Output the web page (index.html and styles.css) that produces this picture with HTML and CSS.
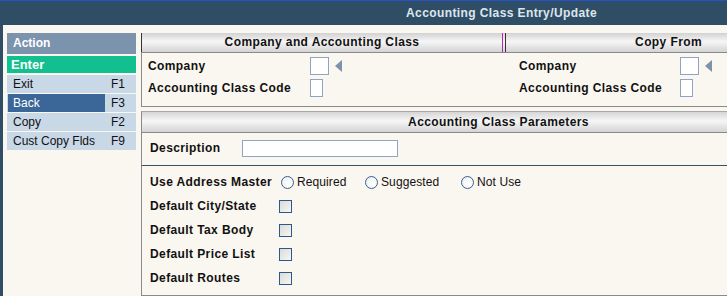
FILE: index.html
```html
<!DOCTYPE html>
<html>
<head>
<meta charset="utf-8">
<link rel="stylesheet" href="styles.css">
</head>
<body>
<div class="topbar"><span class="title">Accounting Class Entry/Update</span></div>
<div class="main">
  <div class="sidebar">
    <div class="act-head">Action</div>
    <div class="enter">Enter</div>
    <div class="item"><span class="lbl">Exit</span><span class="key">F1</span></div>
    <div class="item"><span class="lbl sel">Back</span><span class="key">F3</span></div>
    <div class="item"><span class="lbl">Copy</span><span class="key">F2</span></div>
    <div class="item"><span class="lbl">Cust Copy Flds</span><span class="key">F9</span></div>
  </div>
  <div class="content">
    <div class="panel1">
      <div class="heads">
        <div class="h1">Company and Accounting Class</div>
        <div class="h2">Copy From</div>
      </div>
      <div class="p1body">
        <div class="half left">
          <div class="frow"><span class="flabel">Company</span><span class="inp w19"></span><span class="tri"></span></div>
          <div class="frow"><span class="flabel">Accounting Class Code</span><span class="inp w13"></span></div>
        </div>
        <div class="half right">
          <div class="frow"><span class="flabel">Company</span><span class="inp w19"></span><span class="tri"></span></div>
          <div class="frow"><span class="flabel">Accounting Class Code</span><span class="inp w13"></span></div>
        </div>
      </div>
    </div>
    <div class="panel2">
      <div class="h3">Accounting Class Parameters</div>
      <div class="descrow"><span class="dlabel">Description</span><span class="inp desc"></span></div>
      <div class="params">
        <div class="prow">
          <span class="plabel wide">Use Address Master</span>
          <span class="opt o1"><span class="radio"></span>Required</span>
          <span class="opt o2"><span class="radio"></span>Suggested</span>
          <span class="opt"><span class="radio"></span>Not Use</span>
        </div>
        <div class="prow"><span class="plabel">Default City/State</span><span class="chk"></span></div>
        <div class="prow"><span class="plabel">Default Tax Body</span><span class="chk"></span></div>
        <div class="prow"><span class="plabel">Default Price List</span><span class="chk"></span></div>
        <div class="prow"><span class="plabel">Default Routes</span><span class="chk"></span></div>
      </div>
    </div>
  </div>
</div>
</body>
</html>
```
FILE: styles.css
```css
html, body {
  margin: 0;
  padding: 0;
}
body {
  width: 727px;
  height: 296px;
  overflow: hidden;
  background: #faf6f0;
  font-family: "Liberation Sans", Arial, sans-serif;
  font-size: 12px;
  color: #111;
}
.topbar {
  height: 24px;
  border-top: 1px solid #2452c8;
  background: #2f4e66;
  display: flex;
  align-items: center;
  justify-content: flex-end;
  padding-right: 130px;
}
.title {
  color: #dde6ee;
  font-weight: bold;
  letter-spacing: 0.4px;
}
.main {
  display: flex;
  height: 271px;
  border-left: 3px solid #2f4e66;
}
.sidebar {
  width: 129px;
  margin-left: 4px;
  padding-top: 8px;
}
.act-head {
  height: 21px;
  line-height: 21px;
  background: #7b93ad;
  color: #fff;
  font-weight: bold;
  padding-left: 6px;
  margin-bottom: 2px;
}
.enter {
  height: 17px;
  line-height: 17px;
  background: #12bf8f;
  color: #fff;
  font-weight: bold;
  font-size: 13px;
  padding-left: 4px;
  margin-bottom: 2px;
}
.item {
  height: 18px;
  background: #c9d8e6;
  margin-bottom: 1px;
  display: flex;
  align-items: stretch;
}
.lbl {
  width: 92px;
  padding-left: 6px;
  line-height: 18px;
}
.lbl.sel {
  background: #3b6798;
  color: #fff;
  width: 92px;
  margin-left: 1px;
  padding-left: 5px;
}
.key {
  padding-left: 6px;
  line-height: 18px;
}
.content {
  margin-left: 5px;
  flex: 1;
  padding-top: 8px;
}
.heads {
  display: flex;
  height: 19px;
  background: linear-gradient(#d2d2d2, #f6f6f6 45%, #e6e6e6 70%, #d4d4d4);
  border-bottom: 1px solid #8a8a8a;
}
.h1, .h2 {
  font-weight: bold;
  letter-spacing: 0.4px;
  line-height: 19px;
  border-left: 1px solid #333;
}
.h1 {
  width: 360px;
  text-align: center;
  border-right: 1px solid #c020c0;
}
.h2 {
  flex: 1;
  margin-left: 2px;
  text-align: right;
  padding-right: 25px;
}
.p1body {
  display: flex;
  height: 53px;
  border-left: 1px solid #8a8a8a;
  border-bottom: 1px solid #8a8a8a;
}
.half {
  padding-top: 2px;
}
.left {
  width: 356px;
  padding-left: 6px;
}
.right {
  flex: 1;
  padding-left: 15px;
}
.frow {
  height: 22px;
  display: flex;
  align-items: center;
}
.flabel {
  width: 162px;
  font-weight: bold;
  letter-spacing: 0.4px;
}
.right .flabel {
  width: 161px;
}
.inp {
  display: inline-block;
  height: 16px;
  background: #fff;
  border: 1px solid #8fa3c3;
  box-sizing: content-box;
}
.w19 { width: 17px; }
.w13 { width: 11px; }
.tri {
  width: 0;
  height: 0;
  margin-left: 6px;
  border-top: 6px solid transparent;
  border-bottom: 6px solid transparent;
  border-right: 7px solid #7d93ad;
}
.panel2 {
  margin-top: 4px;
}
.h3 {
  height: 20px;
  line-height: 20px;
  border-top: 1px solid #a8a8a8;
  border-bottom: 1px solid #8a8a8a;
  border-left: 1px solid #8a8a8a;
  background: linear-gradient(#d6d6d6, #f6f6f6 45%, #e6e6e6 70%, #d4d4d4);
  font-weight: bold;
  letter-spacing: 0.4px;
  text-align: center;
  padding-left: 128px;
}
.descrow {
  height: 30px;
  padding-bottom: 2px;
  display: flex;
  align-items: center;
  padding-left: 8px;
  border-left: 1px solid #8a8a8a;
  border-bottom: 1px solid #3c5064;
}
.dlabel {
  width: 92px;
  font-weight: bold;
  letter-spacing: 0.4px;
}
.inp.desc {
  width: 154px;
  height: 15px;
}
.params {
  height: 125px;
  padding-top: 4px;
  padding-left: 8px;
  border-left: 1px solid #8a8a8a;
  border-bottom: 1px solid #8a8a8a;
}
.prow {
  height: 24px;
  display: flex;
  align-items: center;
}
.plabel {
  width: 129px;
  font-weight: bold;
  letter-spacing: 0.4px;
}
.plabel.wide {
  width: 131px;
}
.opt {
  display: flex;
  align-items: center;
  letter-spacing: 0.1px;
}
.o1 { width: 84px; }
.o2 { width: 96px; }
.radio {
  width: 11px;
  height: 11px;
  border: 1px solid #3a5f8e;
  border-radius: 50%;
  background: radial-gradient(circle at 60% 60%, #fff, #e8ecf0);
  margin-right: 3px;
}
.chk {
  width: 11px;
  height: 11px;
  border: 1px solid #2a5890;
  background: linear-gradient(135deg, #dcdcd6, #f6f6f2);
}
```
